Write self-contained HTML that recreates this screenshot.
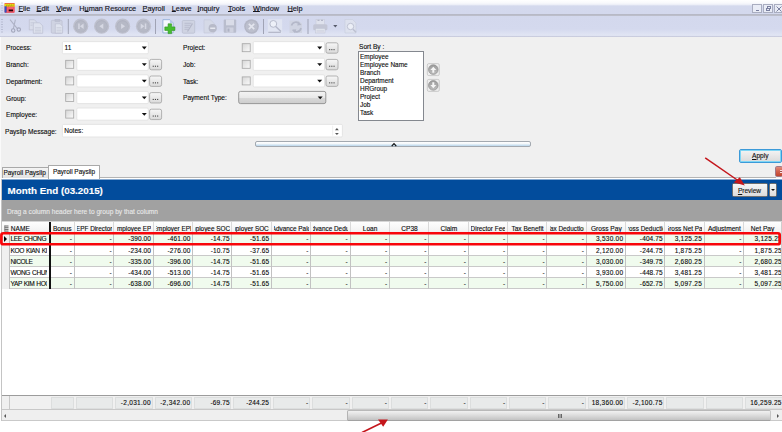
<!DOCTYPE html>
<html><head><meta charset="utf-8">
<style>
*{box-sizing:border-box;margin:0;padding:0}
html,body{width:782px;height:432px;overflow:hidden;background:#fff}
body{font-family:"Liberation Sans",sans-serif;font-size:6.6px;color:#0c0c0c;-webkit-text-stroke-width:0.12px;position:relative}
div,span{position:absolute;white-space:nowrap}
#menubar{left:0;top:0;width:782px;height:16px;background:linear-gradient(#fff 0,#f8f9fc 3px,#eef0f8 4.5px,#d4d9ed 6px,#d3d8ed 14px,#b7b9c6 14px,#b7b9c6 15px,#bcbeca 15px)}
#menubar span{top:3.6px;font-size:7.3px;color:#16161e;line-height:10px;-webkit-text-stroke:0.15px #16161e}
#menubar u{text-decoration-thickness:0.7px;text-underline-offset:-0.4px}
#toolbar{left:0;top:16px;width:782px;height:21px;background:linear-gradient(#d3d8ed 0,#d4d9ee 13px,#e0e4f3 18.8px,#dfe3f2 19.8px,#c8cbde 20.2px,#cdd0e0 21px)}
#form{left:0;top:37px;width:782px;height:128px;background:#f0f0f0}
.lbl{left:6px;font-size:6.6px;color:#0c0c0c;line-height:10px}
.fld{background:#fff;border:1px solid #e3e3e3;border-top-color:#d8d8d8;border-radius:1.5px;height:13px}
.cb{width:8.6px;height:8.6px;border:1px solid #a9a9a9;background:linear-gradient(135deg,#d9d9d9,#fafafa);box-shadow:inset 0 0 0 1px #f4f4f4}
.dd{width:0;height:0;border-left:3px solid transparent;border-right:3px solid transparent;border-top:3.2px solid #111}
.btn{width:11.8px;height:11px;border:1px solid #a4a4a4;border-radius:2px;background:linear-gradient(#f6f6f6,#dcdcdc);}
.btn i{position:absolute;left:2.2px;top:6.2px;width:1.1px;height:1.1px;background:#444;box-shadow:2.2px 0 #444,4.4px 0 #444}
.tbsep{top:3px;width:1px;height:15px;background:#9a9cae}
.hc{top:221.5px;height:11.5px;border-right:1px solid #d9d9d9;font-size:6.6px;color:#0c0c0c}
.hc b{position:absolute;left:2.3px;right:1.5px;top:0;bottom:0;overflow:hidden;font-weight:normal}
.hc span{left:50%;transform:translateX(-50%);top:2.3px;line-height:9px}
.hc{border-left:0}
.row{left:0;width:782px;height:11.2px;border-bottom:1px solid #c9c9c9}
.row .c{top:0;height:11.2px;border-right:1px solid #c2c2c2;text-align:right;padding-right:1.7px;line-height:11px;font-size:6.5px;letter-spacing:0.12px;color:#0c0c0c;overflow:hidden}
.row .ind i{position:absolute;left:3.2px;top:2.5px;width:0;height:0;border-top:3.1px solid transparent;border-bottom:3.1px solid transparent;border-left:3.7px solid #000}
.row .ind{left:1px;top:0;width:8.5px;height:11.2px;background:#f0f0f0;border-right:1px solid #bdbdbd}
.row .nm{left:9.5px;top:0;width:37.7px;height:11.2px;line-height:11.6px;font-size:6.6px;padding-left:1px;color:#0c0c0c;overflow:hidden;letter-spacing:-0.42px;word-spacing:0.6px}
.fc{top:397px;height:11.5px;background:#e8eaea;border:1px solid #dcdede;text-align:right;padding-right:0.8px;line-height:10px;font-size:6.5px;letter-spacing:0.12px;color:#0c0c0c}
</style></head><body>
<div id="menubar">
 <svg style="position:absolute;left:0;top:0" width="20" height="16" viewBox="0 0 20 16">
  <g fill="#a9aec6"><rect x="1.5" y="2.5" width="1" height="1"/><rect x="1.5" y="5" width="1" height="1"/><rect x="1.5" y="7.5" width="1" height="1"/><rect x="1.5" y="10" width="1" height="1"/><rect x="1.5" y="12.5" width="1" height="1"/></g>
  <rect x="4.6" y="2.9" width="10" height="9.8" rx="0.6" fill="#ee3a4a"/>
  <rect x="7" y="6.5" width="6.8" height="5.5" fill="#f4606c"/>
  <rect x="4.6" y="3.7" width="10" height="2.9" fill="#f4ee12"/>
  <path d="M5.5 5h8.3M6 6h7.5" stroke="#8a6a10" stroke-width="0.7" stroke-dasharray="1.2 0.6"/>
  <rect x="4.6" y="6.3" width="1.9" height="6.2" fill="#2b56c8"/>
  <rect x="8.7" y="9.5" width="4.3" height="1.8" fill="#240008"/>
 </svg>
 <span style="left:18.5px"><u>F</u>ile</span>
 <span style="left:36.5px"><u>E</u>dit</span>
 <span style="left:56.2px"><u>V</u>iew</span>
 <span style="left:79.3px">H<u>u</u>man Resource</span>
 <span style="left:142.6px"><u>P</u>ayroll</span>
 <span style="left:171.8px"><u>L</u>eave</span>
 <span style="left:197.4px"><u>I</u>nquiry</span>
 <span style="left:228px"><u>T</u>ools</span>
 <span style="left:253px"><u>W</u>indow</span>
 <span style="left:287.5px"><u>H</u>elp</span>
 <!-- window buttons -->
 <div style="left:752.3px;top:4px;width:9.8px;height:8.8px;border:1px solid #a9adc0;background:#e9ecf6"><div style="left:2.3px;top:5px;width:3.2px;height:1px;background:#7a80a0"></div></div>
 <div style="left:763px;top:4px;width:9.8px;height:8.8px;border:1px solid #a9adc0;background:#e9ecf6">
   <div style="left:3px;top:1px;width:4px;height:3.4px;border:0.7px solid #7a80a0;border-top-width:1.1px"></div>
   <div style="left:1.5px;top:2.8px;width:4px;height:3.4px;border:0.7px solid #7a80a0;border-top-width:1.1px;background:#e6e9f4"></div>
 </div>
 <div style="left:773.7px;top:4px;width:9.8px;height:8.8px;border:1px solid #a9adc0;background:#e9ecf6">
   <svg style="position:absolute;left:1.8px;top:1.2px" width="6" height="6" viewBox="0 0 6 6"><path d="M0.5 0.5L5.5 5.5M5.5 0.5L0.5 5.5" stroke="#7a80a0" stroke-width="1"/></svg>
 </div>
</div>
<div id="toolbar">
 <svg style="position:absolute;left:0;top:0" width="782" height="21" viewBox="0 16 782 21">
  <!-- grip -->
  <g fill="#9aa0b8"><rect x="1.5" y="19" width="1" height="1"/><rect x="1.5" y="21.5" width="1" height="1"/><rect x="1.5" y="24" width="1" height="1"/><rect x="1.5" y="26.5" width="1" height="1"/><rect x="1.5" y="29" width="1" height="1"/><rect x="1.5" y="31.5" width="1" height="1"/></g>
  <!-- scissors -->
  <g stroke="#aeb2c5" fill="none" stroke-width="1.1"><path d="M10 19.6L17.3 28.7M15.4 19.6L13.3 28.8"/><circle cx="13.2" cy="30.5" r="1.7" stroke="#a3a7bb"/><circle cx="18.8" cy="29.6" r="1.7" stroke="#a3a7bb"/></g>
  <!-- copy -->
  <g fill="#d9ddea" stroke="#b7bbcd" stroke-width="0.6"><path d="M29.3 19.7h5l2.5 2.5v7.7h-7.5z"/><path d="M33.3 22.8h6.3l3.1 3.1v7.4h-9.4z" fill="#dde1ed"/></g>
  <g stroke="#bfc3d3" stroke-width="0.5"><path d="M30.5 22.5h3M30.5 24h2M30.5 25.5h2M35 27.5h6M35 29h6M35 30.5h6M35 32h6"/></g>
  <!-- paste -->
  <g fill="#cfd3e2" stroke="#b7bbcd" stroke-width="0.6"><rect x="51.3" y="20.3" width="10.8" height="12.9" rx="1"/><rect x="55" y="19.3" width="4.8" height="2.2" fill="#bdc1d2"/><path d="M55.3 23.8h4.8l2.5 2.5v6.9h-7.3z" fill="#dfe3ee"/></g>
  <g stroke="#bfc3d3" stroke-width="0.5"><path d="M56.5 27.5h5M56.5 29h5M56.5 30.5h5M56.5 32h5"/></g>
  <rect x="67.8" y="19" width="1" height="15" fill="#a0a3b5"/>
  <!-- nav round buttons -->
  <g>
   <circle cx="80.7" cy="26.2" r="7.6" fill="#bec0cd"/><circle cx="80.7" cy="26.3" r="6.2" fill="#b0b3c1"/><circle cx="80.7" cy="26.6" r="5.4" fill="#b6b9c6"/>
   <circle cx="101.6" cy="26.2" r="7.6" fill="#bec0cd"/><circle cx="101.6" cy="26.3" r="6.2" fill="#b0b3c1"/><circle cx="101.6" cy="26.6" r="5.4" fill="#b6b9c6"/>
   <circle cx="122.6" cy="26.2" r="7.6" fill="#bec0cd"/><circle cx="122.6" cy="26.3" r="6.2" fill="#b0b3c1"/><circle cx="122.6" cy="26.6" r="5.4" fill="#b6b9c6"/>
   <circle cx="143.5" cy="26.2" r="7.6" fill="#bec0cd"/><circle cx="143.5" cy="26.3" r="6.2" fill="#b0b3c1"/><circle cx="143.5" cy="26.6" r="5.4" fill="#b6b9c6"/>
   <g fill="#d6d8e3"><path d="M78.2 23.5h1.5v5.4h-1.5zM83.6 23.5v5.4l-3.7-2.7z"/><path d="M103.3 23.5v5.4l-4-2.7z"/><path d="M121.1 23.5v5.4l4-2.7z"/><path d="M140.7 23.5v5.4l3.7-2.7zM144.8 23.5h1.5v5.4h-1.5z"/></g>
  </g>
  <rect x="155" y="19" width="1" height="15" fill="#a0a3b5"/>
  <!-- new doc -->
  <path d="M162.9 19.7h7l3.2 3.2v10h-10.2z" fill="#f6f9fe" stroke="#86a6d4" stroke-width="0.8"/>
  <path d="M169.9 19.7v3.2h3.2z" fill="#b5cbea"/>
  <path d="M168.1 23.8h3.5v3.1h3.3v3.5h-3.3v3.2h-3.5v-3.2h-3.3v-3.5h3.3z" fill="#46be30" stroke="#2c8f20" stroke-width="0.6"/>
  <!-- edit -->
  <g><rect x="182.3" y="20.5" width="12.4" height="12.7" rx="1" fill="#cfd3e2" stroke="#b9bdcf" stroke-width="0.7"/><path d="M184.5 23.3h7M184.5 25.3h6M184.5 27.3h4.5M184.5 29.3h3.5" stroke="#b0b4c7" stroke-width="0.7"/><path d="M187.5 31.5l5-8" stroke="#b3b7c9" stroke-width="1.2"/></g>
  <!-- delete doc -->
  <g><path d="M204 19.8h6.5l3.5 3.5v9.7h-10z" fill="#d5d9e7" stroke="#c3c7d8" stroke-width="0.6"/><circle cx="212.7" cy="28.2" r="4.1" fill="#b7bac9"/><rect x="210.2" y="27.5" width="5" height="1.5" fill="#e6e8f0"/></g>
  <!-- save -->
  <g><rect x="223.7" y="19.5" width="12.5" height="13.2" rx="1" fill="#b9bdcd"/><rect x="226" y="19.5" width="8" height="5.8" fill="#d9dce8"/><rect x="226.5" y="27.5" width="7" height="5.2" fill="#cfd2e0"/><rect x="227.5" y="28.5" width="2" height="3.2" fill="#aeb2c4"/></g>
  <!-- cancel -->
  <circle cx="251.5" cy="26.5" r="7.3" fill="#b3b6c5"/><circle cx="251.5" cy="26.5" r="5.8" fill="#bcbfcd"/><path d="M248.8 23.8l5.4 5.4M254.2 23.8l-5.4 5.4" stroke="#e3e5ee" stroke-width="1.7"/>
  <rect x="263" y="19" width="1" height="15" fill="#a0a3b5"/>
  <!-- search -->
  <rect x="267.8" y="19.3" width="14.4" height="14" fill="#e1e5f2"/><circle cx="273.3" cy="23.9" r="3.4" fill="#edf0f8" stroke="#b6bacb" stroke-width="1"/><path d="M275.7 26.5l5.3 5" stroke="#b4b8ca" stroke-width="1.4"/><path d="M268.3 32.3h12.5" stroke="#aeb2c3" stroke-width="1.1"/>
  <!-- refresh -->
  <g><path d="M289.5 20.5h9l3.5 3v9.5h-12.5z" fill="#d0d4e2"/><path d="M291.5 25.5a4.5 4.5 0 0 1 8-1.5M301 28a4.5 4.5 0 0 1-8 2" stroke="#b4b8c9" stroke-width="1.7" fill="none"/><path d="M298.5 21.5l3 3.5-4.3 0.5zM295 33.3l-3-3.5 4.3-0.5z" fill="#b4b8c9"/></g>
  <rect x="307.5" y="19" width="1" height="15" fill="#a0a3b5"/>
  <!-- printer -->
  <g><rect x="316" y="19.5" width="8.5" height="5.5" fill="#dfe2ed" stroke="#c4c8d7" stroke-width="0.5"/><path d="M317.5 20.3h2M321 20.3h2" stroke="#a9adbf" stroke-width="1"/><rect x="313.2" y="24.3" width="14.2" height="6" rx="1.5" fill="#c3c6d5"/><rect x="315.5" y="28.5" width="9.5" height="4.5" fill="#e3e6ef" stroke="#c0c4d4" stroke-width="0.5"/><path d="M316.5 30.3h7.5M316.5 31.8h7.5" stroke="#c4c8d6" stroke-width="0.6"/></g>
  <path d="M333.2 24.9h4.2l-2.1 2.5z" fill="#565a6b"/>
  <!-- preview -->
  <g><path d="M345 19.5h7.5l3.5 3.5v10h-11z" fill="#dde1ee" stroke="#c8ccdb" stroke-width="0.6"/><circle cx="350.5" cy="26.5" r="3.2" fill="#eceff7" stroke="#bec2d2" stroke-width="1"/><path d="M352.8 29l3.2 3.2" stroke="#bcc0d1" stroke-width="1.4"/></g>
 </svg>
</div>
<div id="form">
</div>
<!-- form items placed relative to page -->
<span class="lbl" style="top:43px">Process:</span>
<span class="lbl" style="top:60.3px">Branch:</span>
<span class="lbl" style="top:77.4px">Department:</span>
<span class="lbl" style="top:93.6px">Group:</span>
<span class="lbl" style="top:109.6px">Employee:</span>
<span class="lbl" style="top:126.7px;left:5px">Payslip Message:</span>

<svg style="position:absolute;left:0;top:0" width="782" height="165" viewBox="0 0 782 165"><defs><linearGradient id="cbg" x1="0" y1="0" x2="1" y2="1"><stop offset="0" stop-color="#d6d6d6"/><stop offset="1" stop-color="#fbfbfb"/></linearGradient><linearGradient id="bg" x1="0" y1="0" x2="0" y2="1"><stop offset="0" stop-color="#f7f7f7"/><stop offset="1" stop-color="#dadada"/></linearGradient><linearGradient id="pg" x1="0" y1="0" x2="0" y2="1"><stop offset="0" stop-color="#f4f4f4"/><stop offset="0.5" stop-color="#e9e9e9"/><stop offset="0.55" stop-color="#d8d8d8"/><stop offset="1" stop-color="#cdcdcd"/></linearGradient></defs><rect x="62.4" y="41.6" width="85.9" height="12.2" rx="1.2" fill="#fff" stroke="#e2e2e2" stroke-width="0.9"/>
<path d="M141.80 46.60h5.0l-2.5 2.8z" fill="#111"/>
<rect x="65.7" y="60.3" width="8.0" height="8.0" fill="url(#cbg)" stroke="#a6a6a6" stroke-width="0.8"/>
<rect x="76.8" y="58.2" width="71.5" height="12.2" rx="1.2" fill="#fff" stroke="#e2e2e2" stroke-width="0.9"/>
<path d="M141.80 63.20h5.0l-2.5 2.8z" fill="#111"/>
<rect x="149.6" y="59.4" width="12" height="10.4" rx="1.8" fill="url(#bg)" stroke="#a2a2a2" stroke-width="0.8"/>
<rect x="152.7" y="65.7" width="1.1" height="1.1" fill="#444"/>
<rect x="154.9" y="65.7" width="1.1" height="1.1" fill="#444"/>
<rect x="157.1" y="65.7" width="1.1" height="1.1" fill="#444"/>
<rect x="65.7" y="76.9" width="8.0" height="8.0" fill="url(#cbg)" stroke="#a6a6a6" stroke-width="0.8"/>
<rect x="76.8" y="74.8" width="71.5" height="12.2" rx="1.2" fill="#fff" stroke="#e2e2e2" stroke-width="0.9"/>
<path d="M141.80 79.80h5.0l-2.5 2.8z" fill="#111"/>
<rect x="149.6" y="76.0" width="12" height="10.4" rx="1.8" fill="url(#bg)" stroke="#a2a2a2" stroke-width="0.8"/>
<rect x="152.7" y="82.3" width="1.1" height="1.1" fill="#444"/>
<rect x="154.9" y="82.3" width="1.1" height="1.1" fill="#444"/>
<rect x="157.1" y="82.3" width="1.1" height="1.1" fill="#444"/>
<rect x="65.7" y="93.5" width="8.0" height="8.0" fill="url(#cbg)" stroke="#a6a6a6" stroke-width="0.8"/>
<rect x="76.8" y="91.4" width="71.5" height="12.2" rx="1.2" fill="#fff" stroke="#e2e2e2" stroke-width="0.9"/>
<path d="M141.80 96.40h5.0l-2.5 2.8z" fill="#111"/>
<rect x="149.6" y="92.6" width="12" height="10.4" rx="1.8" fill="url(#bg)" stroke="#a2a2a2" stroke-width="0.8"/>
<rect x="152.7" y="98.9" width="1.1" height="1.1" fill="#444"/>
<rect x="154.9" y="98.9" width="1.1" height="1.1" fill="#444"/>
<rect x="157.1" y="98.9" width="1.1" height="1.1" fill="#444"/>
<rect x="65.7" y="110.1" width="8.0" height="8.0" fill="url(#cbg)" stroke="#a6a6a6" stroke-width="0.8"/>
<rect x="76.8" y="108.0" width="71.5" height="12.2" rx="1.2" fill="#fff" stroke="#e2e2e2" stroke-width="0.9"/>
<path d="M141.80 113.00h5.0l-2.5 2.8z" fill="#111"/>
<rect x="149.6" y="109.2" width="12" height="10.4" rx="1.8" fill="url(#bg)" stroke="#a2a2a2" stroke-width="0.8"/>
<rect x="152.7" y="115.5" width="1.1" height="1.1" fill="#444"/>
<rect x="154.9" y="115.5" width="1.1" height="1.1" fill="#444"/>
<rect x="157.1" y="115.5" width="1.1" height="1.1" fill="#444"/>
<rect x="242.2" y="43.7" width="8.0" height="8.0" fill="url(#cbg)" stroke="#a6a6a6" stroke-width="0.8"/>
<rect x="253.2" y="41.6" width="71.3" height="12.2" rx="1.2" fill="#fff" stroke="#e2e2e2" stroke-width="0.9"/>
<path d="M317.20 46.60h5.0l-2.5 2.8z" fill="#111"/>
<rect x="326.0" y="42.8" width="12" height="10.4" rx="1.8" fill="url(#bg)" stroke="#a2a2a2" stroke-width="0.8"/>
<rect x="329.1" y="49.1" width="1.1" height="1.1" fill="#444"/>
<rect x="331.3" y="49.1" width="1.1" height="1.1" fill="#444"/>
<rect x="333.5" y="49.1" width="1.1" height="1.1" fill="#444"/>
<rect x="242.2" y="60.3" width="8.0" height="8.0" fill="url(#cbg)" stroke="#a6a6a6" stroke-width="0.8"/>
<rect x="253.2" y="58.2" width="71.3" height="12.2" rx="1.2" fill="#fff" stroke="#e2e2e2" stroke-width="0.9"/>
<path d="M317.20 63.20h5.0l-2.5 2.8z" fill="#111"/>
<rect x="326.0" y="59.4" width="12" height="10.4" rx="1.8" fill="url(#bg)" stroke="#a2a2a2" stroke-width="0.8"/>
<rect x="329.1" y="65.7" width="1.1" height="1.1" fill="#444"/>
<rect x="331.3" y="65.7" width="1.1" height="1.1" fill="#444"/>
<rect x="333.5" y="65.7" width="1.1" height="1.1" fill="#444"/>
<rect x="242.2" y="76.9" width="8.0" height="8.0" fill="url(#cbg)" stroke="#a6a6a6" stroke-width="0.8"/>
<rect x="253.2" y="74.8" width="71.3" height="12.2" rx="1.2" fill="#fff" stroke="#e2e2e2" stroke-width="0.9"/>
<path d="M317.20 79.80h5.0l-2.5 2.8z" fill="#111"/>
<rect x="326.0" y="76.0" width="12" height="10.4" rx="1.8" fill="url(#bg)" stroke="#a2a2a2" stroke-width="0.8"/>
<rect x="329.1" y="82.3" width="1.1" height="1.1" fill="#444"/>
<rect x="331.3" y="82.3" width="1.1" height="1.1" fill="#444"/>
<rect x="333.5" y="82.3" width="1.1" height="1.1" fill="#444"/>
<rect x="238.7" y="91.4" width="87.1" height="12.2" rx="1.8" fill="url(#pg)" stroke="#8e8e8e" stroke-width="0.9"/>
<path d="M317.70 96.40h5.0l-2.5 2.8z" fill="#111"/>
<rect x="62.4" y="124.4" width="280.0" height="12.6" rx="1.2" fill="#fff" stroke="#e2e2e2" stroke-width="0.9"/>
<rect x="332.3" y="125.6" width="0.8" height="10" fill="#ebebeb"/>
<path d="M335 130.3h3.8l-1.9-2.2z" fill="#555"/>
<path d="M335 132.9h3.8l-1.9 2.2z" fill="#555"/></svg>
<span class="lbl" style="left:64.6px;top:42.7px">11</span><span class="lbl" style="left:64.2px;top:126px">Notes:</span>
<!-- middle column -->
<span class="lbl" style="left:183px;top:43.4px">Project:</span>
<span class="lbl" style="left:183px;top:59.7px">Job:</span>
<span class="lbl" style="left:183px;top:77.2px">Task:</span>
<span class="lbl" style="left:183px;top:93px">Payment Type:</span>

<!-- sort by -->
<span class="lbl" style="left:359px;top:42px">Sort By :</span>
<div style="left:358px;top:51px;width:66px;height:70px;background:#fff;border:1px solid #84888f;font-size:6.45px;line-height:8px;padding:0.8px 0 0 1px;white-space:pre;color:#0c0c0c">Employee
Employee Name
Branch
Department
HRGroup
Project
Job
Task</div>
<svg style="position:absolute;left:426px;top:62px" width="16" height="32" viewBox="426 62 16 32">
 <defs><linearGradient id="cg" x1="0" y1="0" x2="0" y2="1"><stop offset="0" stop-color="#9c9c9c"/><stop offset="1" stop-color="#bdbdbd"/></linearGradient></defs>
 <rect x="427.3" y="63.6" width="12" height="12" rx="1.5" fill="#ededed" stroke="#c2c2c2" stroke-width="0.8"/>
 <circle cx="433.3" cy="69.6" r="4.8" fill="url(#cg)" stroke="#8e8e8e" stroke-width="0.7"/><path d="M430.3 70.1l3-3.4 3 3.4h-2v2.7h-2v-2.7z" fill="#f6f6f6"/>
 <rect x="427.3" y="79.4" width="12" height="12" rx="1.5" fill="#ededed" stroke="#c2c2c2" stroke-width="0.8"/>
 <circle cx="433.3" cy="85.4" r="4.8" fill="url(#cg)" stroke="#8e8e8e" stroke-width="0.7"/><path d="M430.3 84.9l3 3.4 3-3.4h-2v-2.7h-2v2.7z" fill="#f6f6f6"/>
</svg>
<!-- splitter -->
<div style="left:255px;top:141px;width:275.5px;height:5.6px;border:1px solid #a3a9b0;border-radius:2px;background:linear-gradient(#ffffff 0,#f4f8fb 40%,#b9d6ec 100%)"></div>
<svg style="position:absolute;left:389.6px;top:141.7px" width="8" height="5" viewBox="0 0 8 5"><path d="M1.7 4.2L4 1.6l2.3 2.6" stroke="#111" stroke-width="1.2" fill="none"/></svg>
<!-- apply -->
<div style="left:739px;top:149.3px;width:42.5px;height:13.6px;border:1px solid #3c9ad8;border-radius:2px;background:linear-gradient(#f4f4f4,#dadada);box-shadow:inset 0 0 0 1px #7fd6f5"><span style="left:12px;top:1.2px;line-height:9px;font-size:6.6px;color:#111"><u>A</u>pply</span></div>

<!-- tabs -->
<div style="left:0;top:163px;width:782px;height:15px;background:#f0f0f0"></div><div style="left:0;top:37px;width:1px;height:141px;background:#fafafa"></div><div style="left:0;top:178px;width:782px;height:2px;background:#fff"></div>
<div style="left:1.5px;top:166.7px;width:47px;height:11px;border:1px solid #a9a9a9;border-bottom:none;background:linear-gradient(#f4f4f4,#e2e2e2);border-radius:1px 1px 0 0"><span style="left:1px;top:0.8px;font-size:6.45px;line-height:9px">Payroll Payslip</span></div>
<div style="left:48.3px;top:164.7px;width:51.5px;height:14.5px;border:1px solid #a9a9a9;border-bottom:none;background:#fff;border-radius:1px 1px 0 0"><span style="left:3.6px;top:1px;font-size:6.45px;line-height:9px">Payroll Payslip</span></div>
<div style="left:99.5px;top:177px;width:676px;height:1px;background:#b4b4b4"></div>
<div style="left:775.3px;top:165.6px;width:8px;height:11.8px;background:linear-gradient(#e08a7a,#d0604c 50%,#c2452e);border:1px solid #a07888;border-radius:1.8px;"><div style="left:3.3px;top:3.6px;width:2.6px;height:1.1px;background:#f4e4e4"></div><div style="left:3.3px;top:5.6px;width:2.6px;height:1.1px;background:#f4e4e4"></div><div style="left:4px;top:4.4px;width:1.4px;height:1.4px;background:#a04a48"></div></div>

<!-- blue banner -->
<div style="left:2px;top:180px;width:780px;height:20px;background:#024c9c;box-shadow:0 -1px 0 #86a9d0"></div>
<span style="left:7.6px;top:184px;font-size:9.8px;font-weight:bold;color:#fff;line-height:13px">Month End (03.2015)</span>
<div style="left:732.3px;top:183px;width:35.9px;height:14px;border:1px solid #707070;border-radius:1.5px;background:linear-gradient(#f6f6f6,#dcdcdc)"><span style="left:4.6px;top:1.7px;font-size:6.5px;line-height:9px;color:#111"><u>P</u>review</span></div>
<div style="left:769px;top:183px;width:7.6px;height:14px;border:1px solid #707070;border-radius:1.5px;background:linear-gradient(#f6f6f6,#dcdcdc)"><div class="dd" style="left:0.5px;top:5.2px;border-left-width:2.3px;border-right-width:2.3px;border-top-width:2.8px"></div></div>
<!-- gray group panel -->
<div style="left:2px;top:200px;width:780px;height:21px;background:#a1a1a1;box-shadow:0 1px 0 #d6d6d6"></div>
<span style="left:7px;top:207.2px;font-size:6.6px;color:#e8e8e8;line-height:9px">Drag a column header here to group by that column</span>
<!-- grid -->

<div style="left:2px;top:222px;width:780px;height:11px;background:linear-gradient(#fefefe,#f0f0f0)"></div>
<svg style="position:absolute;left:3.5px;top:224.5px" width="5" height="7" viewBox="0 0 5 7"><path d="M0.5 1h4M0.5 2.7h4M0.5 4.4h4M0.5 6.1h4" stroke="#555" stroke-width="0.9"/><path d="M0.8 0.5v6" stroke="#777" stroke-width="0.8"/></svg>
<div class="hc" style="left:9.5px;width:40.5px;border-right:1.5px solid #111"><span style="left:1.3px;transform:none">NAME</span></div>
<div style="left:1.5px;top:395.3px;width:781px;height:14.5px;background:#f0f0f0;border-top:1px solid #9c9c9c;border-bottom:1px solid #c8c8c8"></div>
<div class="hc" style="left:49.9px;width:24.9px"><b><span style="font-size:6.6px;transform:translateX(calc(-50% + 0px))">Bonus</span></b></div>
<div class="hc" style="left:74.8px;width:39.60000000000001px"><b><span style="font-size:6.35px;transform:translateX(calc(-50% + -0.3px))">EPF Director</span></b></div>
<div class="hc" style="left:114.4px;width:39.359999999999985px"><b><span style="font-size:6.35px;transform:translateX(calc(-50% + 0px))">Employee EPF</span></b></div>
<div class="hc" style="left:153.76px;width:39.360000000000014px"><b><span style="font-size:6.35px;transform:translateX(calc(-50% + 0px))">Employer EPF</span></b></div>
<div class="hc" style="left:193.12px;width:39.359999999999985px"><b><span style="font-size:6.4px;transform:translateX(calc(-50% + 0px))">Employee SOCSO</span></b></div>
<div class="hc" style="left:232.48px;width:39.359999999999985px"><b><span style="font-size:6.4px;transform:translateX(calc(-50% + 0px))">Employer SOCSO</span></b></div>
<div class="hc" style="left:271.84px;width:39.360000000000014px"><b><span style="font-size:6.4px;transform:translateX(calc(-50% + 0px))">Advance Paid</span></b></div>
<div class="hc" style="left:311.2px;width:39.360000000000014px"><b><span style="font-size:6.4px;transform:translateX(calc(-50% + 0px))">Advance Deduct</span></b></div>
<div class="hc" style="left:350.56px;width:39.360000000000014px"><b><span style="font-size:6.6px;transform:translateX(calc(-50% + 0px))">Loan</span></b></div>
<div class="hc" style="left:389.92px;width:39.35999999999996px"><b><span style="font-size:6.6px;transform:translateX(calc(-50% + 0px))">CP38</span></b></div>
<div class="hc" style="left:429.28px;width:39.360000000000014px"><b><span style="font-size:6.6px;transform:translateX(calc(-50% + 0px))">Claim</span></b></div>
<div class="hc" style="left:468.64px;width:39.360000000000014px"><b><span style="font-size:6.4px;transform:translateX(calc(-50% + 0px))">Director Fee</span></b></div>
<div class="hc" style="left:508.0px;width:39.360000000000014px"><b><span style="font-size:6.5px;transform:translateX(calc(-50% + 0px))">Tax Benefit</span></b></div>
<div class="hc" style="left:547.36px;width:39.360000000000014px"><b><span style="font-size:6.4px;transform:translateX(calc(-50% + 0px))">Tax Deduction</span></b></div>
<div class="hc" style="left:586.72px;width:39.360000000000014px"><b><span style="font-size:6.6px;transform:translateX(calc(-50% + 0px))">Gross Pay</span></b></div>
<div class="hc" style="left:626.08px;width:39.360000000000014px"><b><span style="font-size:6.4px;transform:translateX(calc(-50% + 0px))">Gross Deduction</span></b></div>
<div class="hc" style="left:665.44px;width:39.3599999999999px"><b><span style="font-size:6.4px;transform:translateX(calc(-50% + 0px))">Gross Net Pay</span></b></div>
<div class="hc" style="left:704.8px;width:39.360000000000014px"><b><span style="font-size:6.6px;transform:translateX(calc(-50% + 0px))">Adjustment</span></b></div>
<div class="hc" style="left:744.16px;width:40.440000000000055px"><b><span style="font-size:6.6px;transform:translateX(calc(-50% + -1.7px))">Net Pay</span></b></div>
<div class="row" style="top:233.39999999999998px;background:#f0fbee">
<div class="ind"><i></i></div><div class="nm">LEE CHONG</div>
<div class="c" style="left:49.9px;width:24.9px">-</div>
<div class="c" style="left:74.8px;width:39.60000000000001px">-</div>
<div class="c" style="left:114.4px;width:39.359999999999985px">-390.00</div>
<div class="c" style="left:153.76px;width:39.360000000000014px">-461.00</div>
<div class="c" style="left:193.12px;width:39.359999999999985px">-14.75</div>
<div class="c" style="left:232.48px;width:39.359999999999985px">-51.65</div>
<div class="c" style="left:271.84px;width:39.360000000000014px">-</div>
<div class="c" style="left:311.2px;width:39.360000000000014px">-</div>
<div class="c" style="left:350.56px;width:39.360000000000014px">-</div>
<div class="c" style="left:389.92px;width:39.35999999999996px">-</div>
<div class="c" style="left:429.28px;width:39.360000000000014px">-</div>
<div class="c" style="left:468.64px;width:39.360000000000014px">-</div>
<div class="c" style="left:508.0px;width:39.360000000000014px">-</div>
<div class="c" style="left:547.36px;width:39.360000000000014px">-</div>
<div class="c" style="left:586.72px;width:39.360000000000014px;letter-spacing:0.27px">3,530.00</div>
<div class="c" style="left:626.08px;width:39.360000000000014px">-404.75</div>
<div class="c" style="left:665.44px;width:39.3599999999999px;letter-spacing:0.27px">3,125.25</div>
<div class="c" style="left:704.8px;width:39.360000000000014px">-</div>
<div class="c" style="left:744.16px;width:40.440000000000055px;letter-spacing:0.27px">3,125.25</div>
</div>
<div class="row" style="top:244.59999999999997px;background:#fff">
<div class="ind"></div><div class="nm">KOO KIAN KI</div>
<div class="c" style="left:49.9px;width:24.9px">-</div>
<div class="c" style="left:74.8px;width:39.60000000000001px">-</div>
<div class="c" style="left:114.4px;width:39.359999999999985px">-234.00</div>
<div class="c" style="left:153.76px;width:39.360000000000014px">-276.00</div>
<div class="c" style="left:193.12px;width:39.359999999999985px">-10.75</div>
<div class="c" style="left:232.48px;width:39.359999999999985px">-37.65</div>
<div class="c" style="left:271.84px;width:39.360000000000014px">-</div>
<div class="c" style="left:311.2px;width:39.360000000000014px">-</div>
<div class="c" style="left:350.56px;width:39.360000000000014px">-</div>
<div class="c" style="left:389.92px;width:39.35999999999996px">-</div>
<div class="c" style="left:429.28px;width:39.360000000000014px">-</div>
<div class="c" style="left:468.64px;width:39.360000000000014px">-</div>
<div class="c" style="left:508.0px;width:39.360000000000014px">-</div>
<div class="c" style="left:547.36px;width:39.360000000000014px">-</div>
<div class="c" style="left:586.72px;width:39.360000000000014px;letter-spacing:0.27px">2,120.00</div>
<div class="c" style="left:626.08px;width:39.360000000000014px">-244.75</div>
<div class="c" style="left:665.44px;width:39.3599999999999px;letter-spacing:0.27px">1,875.25</div>
<div class="c" style="left:704.8px;width:39.360000000000014px">-</div>
<div class="c" style="left:744.16px;width:40.440000000000055px;letter-spacing:0.27px">1,875.25</div>
</div>
<div class="row" style="top:255.79999999999998px;background:#f0fbee">
<div class="ind"></div><div class="nm">NICOLE</div>
<div class="c" style="left:49.9px;width:24.9px">-</div>
<div class="c" style="left:74.8px;width:39.60000000000001px">-</div>
<div class="c" style="left:114.4px;width:39.359999999999985px">-335.00</div>
<div class="c" style="left:153.76px;width:39.360000000000014px">-396.00</div>
<div class="c" style="left:193.12px;width:39.359999999999985px">-14.75</div>
<div class="c" style="left:232.48px;width:39.359999999999985px">-51.65</div>
<div class="c" style="left:271.84px;width:39.360000000000014px">-</div>
<div class="c" style="left:311.2px;width:39.360000000000014px">-</div>
<div class="c" style="left:350.56px;width:39.360000000000014px">-</div>
<div class="c" style="left:389.92px;width:39.35999999999996px">-</div>
<div class="c" style="left:429.28px;width:39.360000000000014px">-</div>
<div class="c" style="left:468.64px;width:39.360000000000014px">-</div>
<div class="c" style="left:508.0px;width:39.360000000000014px">-</div>
<div class="c" style="left:547.36px;width:39.360000000000014px">-</div>
<div class="c" style="left:586.72px;width:39.360000000000014px;letter-spacing:0.27px">3,030.00</div>
<div class="c" style="left:626.08px;width:39.360000000000014px">-349.75</div>
<div class="c" style="left:665.44px;width:39.3599999999999px;letter-spacing:0.27px">2,680.25</div>
<div class="c" style="left:704.8px;width:39.360000000000014px">-</div>
<div class="c" style="left:744.16px;width:40.440000000000055px;letter-spacing:0.27px">2,680.25</div>
</div>
<div class="row" style="top:267.0px;background:#fff">
<div class="ind"></div><div class="nm">WONG CHUN</div>
<div class="c" style="left:49.9px;width:24.9px">-</div>
<div class="c" style="left:74.8px;width:39.60000000000001px">-</div>
<div class="c" style="left:114.4px;width:39.359999999999985px">-434.00</div>
<div class="c" style="left:153.76px;width:39.360000000000014px">-513.00</div>
<div class="c" style="left:193.12px;width:39.359999999999985px">-14.75</div>
<div class="c" style="left:232.48px;width:39.359999999999985px">-51.65</div>
<div class="c" style="left:271.84px;width:39.360000000000014px">-</div>
<div class="c" style="left:311.2px;width:39.360000000000014px">-</div>
<div class="c" style="left:350.56px;width:39.360000000000014px">-</div>
<div class="c" style="left:389.92px;width:39.35999999999996px">-</div>
<div class="c" style="left:429.28px;width:39.360000000000014px">-</div>
<div class="c" style="left:468.64px;width:39.360000000000014px">-</div>
<div class="c" style="left:508.0px;width:39.360000000000014px">-</div>
<div class="c" style="left:547.36px;width:39.360000000000014px">-</div>
<div class="c" style="left:586.72px;width:39.360000000000014px;letter-spacing:0.27px">3,930.00</div>
<div class="c" style="left:626.08px;width:39.360000000000014px">-448.75</div>
<div class="c" style="left:665.44px;width:39.3599999999999px;letter-spacing:0.27px">3,481.25</div>
<div class="c" style="left:704.8px;width:39.360000000000014px">-</div>
<div class="c" style="left:744.16px;width:40.440000000000055px;letter-spacing:0.27px">3,481.25</div>
</div>
<div class="row" style="top:278.2px;background:#f0fbee">
<div class="ind"></div><div class="nm">YAP KIM HOC</div>
<div class="c" style="left:49.9px;width:24.9px">-</div>
<div class="c" style="left:74.8px;width:39.60000000000001px">-</div>
<div class="c" style="left:114.4px;width:39.359999999999985px">-638.00</div>
<div class="c" style="left:153.76px;width:39.360000000000014px">-696.00</div>
<div class="c" style="left:193.12px;width:39.359999999999985px">-14.75</div>
<div class="c" style="left:232.48px;width:39.359999999999985px">-51.65</div>
<div class="c" style="left:271.84px;width:39.360000000000014px">-</div>
<div class="c" style="left:311.2px;width:39.360000000000014px">-</div>
<div class="c" style="left:350.56px;width:39.360000000000014px">-</div>
<div class="c" style="left:389.92px;width:39.35999999999996px">-</div>
<div class="c" style="left:429.28px;width:39.360000000000014px">-</div>
<div class="c" style="left:468.64px;width:39.360000000000014px">-</div>
<div class="c" style="left:508.0px;width:39.360000000000014px">-</div>
<div class="c" style="left:547.36px;width:39.360000000000014px">-</div>
<div class="c" style="left:586.72px;width:39.360000000000014px;letter-spacing:0.27px">5,750.00</div>
<div class="c" style="left:626.08px;width:39.360000000000014px">-652.75</div>
<div class="c" style="left:665.44px;width:39.3599999999999px;letter-spacing:0.27px">5,097.25</div>
<div class="c" style="left:704.8px;width:39.360000000000014px">-</div>
<div class="c" style="left:744.16px;width:40.440000000000055px;letter-spacing:0.27px">5,097.25</div>
</div>
<div class="fc" style="left:50.9px;width:22.9px"></div>
<div class="fc" style="left:75.8px;width:37.60000000000001px"></div>
<div class="fc" style="left:115.4px;width:37.359999999999985px;letter-spacing:0.3px">-2,031.00</div>
<div class="fc" style="left:154.76px;width:37.360000000000014px;letter-spacing:0.3px">-2,342.00</div>
<div class="fc" style="left:194.12px;width:37.359999999999985px">-69.75</div>
<div class="fc" style="left:233.48px;width:37.359999999999985px">-244.25</div>
<div class="fc" style="left:272.84px;width:37.360000000000014px">-</div>
<div class="fc" style="left:312.2px;width:37.360000000000014px">-</div>
<div class="fc" style="left:351.56px;width:37.360000000000014px">-</div>
<div class="fc" style="left:390.92px;width:37.35999999999996px">-</div>
<div class="fc" style="left:430.28px;width:37.360000000000014px">-</div>
<div class="fc" style="left:469.64px;width:37.360000000000014px">-</div>
<div class="fc" style="left:509.0px;width:37.360000000000014px">-</div>
<div class="fc" style="left:548.36px;width:37.360000000000014px">-</div>
<div class="fc" style="left:587.72px;width:37.360000000000014px;letter-spacing:0.3px">18,360.00</div>
<div class="fc" style="left:627.08px;width:37.360000000000014px;letter-spacing:0.3px">-2,100.75</div>
<div class="fc" style="left:666.44px;width:37.3599999999999px"></div>
<div class="fc" style="left:705.8px;width:37.360000000000014px"></div>
<div class="fc" style="left:745.16px;width:38.440000000000055px;letter-spacing:0.3px">16,259.25</div>
<div style="left:781px;top:222px;width:1px;height:68px;background:#cdcdcd"></div>
<div style="left:0;top:179px;width:1px;height:242px;background:#fff"></div><div style="left:1px;top:179px;width:1px;height:242px;background:#c4c4c4"></div>
<div style="left:9px;top:396px;width:1px;height:13.5px;background:#c9c9c9"></div>
<div style="left:49px;top:222px;width:2px;height:67px;background:linear-gradient(90deg,#111 0,#111 75%,#777 100%)"></div>
<div class="fc" style="left:10px;width:39px;border:none;background:#f0f0f0"></div>
<!-- scrollbar -->
<div style="left:1.5px;top:410px;width:781px;height:11px;background:#efefef;border-bottom:1px solid #c9c9c9"></div>
<div style="left:4px;top:413.5px;width:0;height:0;border-top:2px solid transparent;border-bottom:2px solid transparent;border-right:2.5px solid #555"></div>
<div style="left:776.5px;top:413.5px;width:0;height:0;border-top:2px solid transparent;border-bottom:2px solid transparent;border-left:2.5px solid #555"></div>
<div style="left:346.5px;top:410px;width:424.5px;height:11px;border:1px solid #b4b4b4;border-top-color:#b9b9b9;border-bottom-color:#a2a2a2;border-right-color:#c4c4c4;border-radius:1.5px;background:linear-gradient(#f1f1f1 0,#e0e0e0 40%,#c3c3c3 100%)"></div>
<div style="left:558px;top:414px;width:1px;height:3.5px;background:#666;box-shadow:1.5px 0 #666,3px 0 #666"></div>
<!-- red annotations -->

<svg style="position:absolute;left:0;top:0;pointer-events:none" width="782" height="432">
<rect x="1.4" y="233.250" width="778.3" height="11" rx="1.8" fill="none" stroke="#f8060a" stroke-width="2.7"/>
 <path d="M705.2 157.8L738 180.5" stroke="#c4161c" stroke-width="1.5"/><path d="M744.8 185.5L733.7 182.2L739.9 177.2z" fill="#c4161c"/>
 <path d="M362 432.5L382 422.8" stroke="#c4161c" stroke-width="1.6"/><path d="M387.9 419.4L378 419.6L383.2 426.8z" fill="#c4161c"/>
</svg>
</body></html>
